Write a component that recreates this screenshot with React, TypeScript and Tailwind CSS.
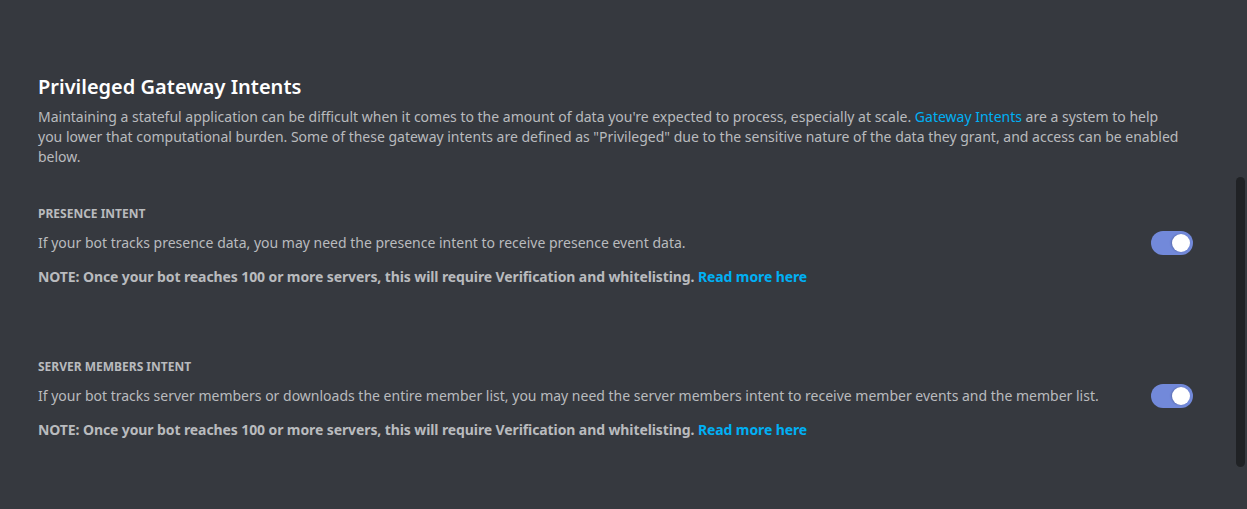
const font = { fontFamily: '"Noto Sans", "Open Sans", sans-serif' };

interface Intent {
  title: string;
  description: string;
}

const intents: Intent[] = [
  {
    title: 'Presence Intent',
    description:
      'If your bot tracks presence data, you may need the presence intent to receive presence event data.',
  },
  {
    title: 'Server Members Intent',
    description:
      'If your bot tracks server members or downloads the entire member list, you may need the server members intent to receive member events and the member list.',
  },
];

function Toggle() {
  return (
    <div className="flex h-6 w-[42px] shrink-0 items-center justify-end rounded-full bg-[#7289da] px-[3px]">
      <div className="h-[18px] w-[18px] rounded-full bg-white shadow-[-1px_0_2px_rgba(0,0,0,0.2)]" />
    </div>
  );
}

function IntentRow({ intent, first }: { intent: Intent; first: boolean }) {
  return (
    <div className={first ? 'mt-[39px]' : 'mt-[72px]'}>
      <h3 className="text-[12px] font-bold uppercase leading-4 text-[#b9bbbe]">{intent.title}</h3>
      <div className="mt-[9px] flex items-center justify-between">
        <p className="text-[14px] leading-5 text-[#b9bbbe]">{intent.description}</p>
        <Toggle />
      </div>
      <p className="mt-[12px] text-[14px] font-bold leading-5 tracking-[-0.1px] text-[#b9bbbe]">
        NOTE: Once your bot reaches 100 or more servers, this will require Verification and whitelisting.{' '}
        <a className="text-[#00b0f4]">Read more here</a>
      </p>
    </div>
  );
}

export default function App() {
  return (
    <div className="relative h-[509px] w-full overflow-hidden bg-[#36393f]" style={font}>
      <div className="w-[1193px] pl-[38px] pt-[75px]">
        <h2 className="text-[20px] font-semibold leading-6 text-white">Privileged Gateway Intents</h2>
        <p className="mt-[8px] max-w-[1144px] text-[14px] leading-5 text-[#b9bbbe]">
          Maintaining a stateful application can be difficult when it comes to the amount of data you're expected to
          process, especially at scale. <a className="text-[#00b0f4]">Gateway Intents</a> are a system to help you
          lower that computational burden. Some of these gateway intents are defined as "Privileged" due to the
          sensitive nature of the data they grant, and access can be enabled below.
        </p>
        {intents.map((intent, i) => (
          <IntentRow key={intent.title} intent={intent} first={i === 0} />
        ))}
      </div>
      {/* scrollbar */}
      <div className="absolute right-[2px] top-[177px] h-[290px] w-[9px] rounded-full bg-[#202225]" />
    </div>
  );
}
